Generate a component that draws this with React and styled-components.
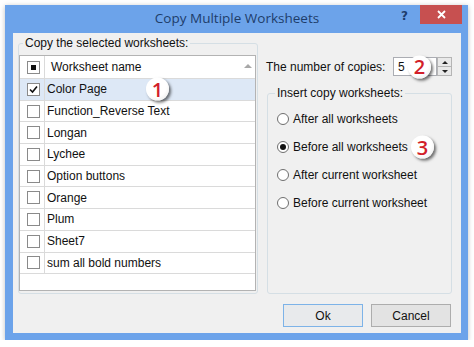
import React from "react";
import styled, { createGlobalStyle } from "styled-components";

const GlobalStyle = createGlobalStyle`
    html, body {
        margin: 0;
        padding: 0;
        background: #ffffff;
    }
    body {
        font-family: "Liberation Sans", Arial, sans-serif;
        font-size: 12px;
        color: #111;
    }
`;

const Page = styled.div`
    padding: 5px 0 0 5px;
`;

const Window = styled.div`
    width: 463px;
    height: 335px;
    box-sizing: border-box;
    background: #6ca3ea;
    padding: 0 7px 7px 8px;
    display: flex;
    flex-direction: column;
    box-shadow: 0 1px 5px rgba(0, 0, 0, 0.25);
`;

const TitleBar = styled.div`
    height: 28px;
    display: grid;
    grid-template-columns: 1fr auto 1fr;
    align-items: start;
`;

const Title = styled.div`
    grid-column: 2;
    font-family: "Open Sans", "Liberation Sans", sans-serif;
    font-size: 13.5px;
    line-height: 26px;
    color: #1e3d6b;
`;

const TitleControls = styled.div`
    grid-column: 3;
    justify-self: end;
    display: flex;
    align-items: flex-start;
    margin-right: -1px;
`;

const Help = styled.span`
    font-family: "DejaVu Sans", sans-serif;
    font-weight: bold;
    font-size: 12px;
    color: #1e3d6b;
    margin-top: 4px;
    margin-right: 12px;
`;

const Close = styled.div`
    width: 42px;
    height: 19px;
    background: #c75050;
    display: flex;
    align-items: center;
    justify-content: center;
`;

const Client = styled.div`
    flex: 1;
    background: #f0f0f0;
    display: grid;
    grid-template-columns: 240px 185px;
    grid-template-rows: 1fr auto;
    column-gap: 9px;
    row-gap: 10px;
    padding: 3px 9px 6px 5px;
`;

const GroupBox = styled.fieldset`
    margin: 0;
    min-width: 0;
    border: 1px solid #d5dfe5;
    border-radius: 3px;
    display: flex;
    flex-direction: column;
    padding: ${(p) => p.$pad};
    ${(p) => p.$grow && "flex: 1;"}
    ${(p) => p.$top && `margin-top: ${p.$top}px;`}
`;

const Legend = styled.legend`
    padding: 0 2px;
    margin-left: ${(p) => p.$offset}px;
    line-height: 14px;
    font-size: 12px;
`;

const List = styled.div`
    flex: 1;
    background: #ffffff;
    border: 1px solid #b3b3b3;
    display: flex;
    flex-direction: column;
`;

const ListRow = styled.div`
    position: relative;
    display: grid;
    grid-template-columns: 25px 1fr;
    height: ${(p) => (p.$header ? 22 : 20.7)}px;
    border-bottom: 1px solid #dadada;
    background: ${(p) => (p.$selected ? "#dde8f6" : "transparent")};
`;

const CheckCell = styled.div`
    border-right: 1px solid #dadada;
    display: flex;
    align-items: center;
    justify-content: center;
    padding-left: 2px;
`;

const NameCell = styled.div`
    display: flex;
    align-items: center;
    padding-left: ${(p) => (p.$header ? 6 : 2)}px;
    padding-right: 3px;
    white-space: nowrap;
`;

const SortArrow = styled.span`
    margin-left: auto;
    width: 0;
    height: 0;
    border-left: 4px solid transparent;
    border-right: 4px solid transparent;
    border-bottom: 4px solid #a8a8a8;
    margin-top: -2px;
`;

const Box = styled.span`
    width: 13px;
    height: 13px;
    box-sizing: border-box;
    border: 1px solid #8a8a8a;
    background: #fff;
    display: flex;
    align-items: center;
    justify-content: center;
`;

const Dot = styled.span`
    width: 5px;
    height: 5px;
    background: #111;
`;

const RightColumn = styled.div`
    display: flex;
    flex-direction: column;
`;

const CopiesRow = styled.div`
    margin-top: 21px;
    height: 19px;
    display: flex;
    align-items: center;
`;

const CopiesLabel = styled.span`
    flex: 1;
    margin-left: -1px;
`;

const SpinInput = styled.div`
    position: relative;
    width: 44px;
    height: 19px;
    box-sizing: border-box;
    border: 1px solid #abadb3;
    background: #fff;
    padding-left: 4px;
    display: flex;
    align-items: center;
`;

const Spinner = styled.div`
    width: 15px;
    height: 19px;
    display: flex;
    flex-direction: column;
`;

const SpinButton = styled.div`
    flex: 1;
    border: 1px solid #b5b5b5;
    background: #e9e9e9;
    display: flex;
    align-items: center;
    justify-content: center;
    & + & {
        border-top: none;
    }
`;

const Arrow = styled.span`
    width: 0;
    height: 0;
    border-left: 3px solid transparent;
    border-right: 3px solid transparent;
    ${(p) => (p.$up ? "border-bottom: 3px solid #222;" : "border-top: 3px solid #222;")}
`;

const RadioRow = styled.label`
    position: relative;
    height: 28px;
    display: flex;
    align-items: center;
    gap: 4px;
    white-space: nowrap;
`;

const RadioCircle = styled.span`
    width: 12px;
    height: 12px;
    box-sizing: border-box;
    border-radius: 50%;
    border: 1px solid #6e6e6e;
    background: #fff;
    display: flex;
    align-items: center;
    justify-content: center;
    &::after {
        content: "";
        width: 6px;
        height: 6px;
        border-radius: 50%;
        background: ${(p) => (p.$checked ? "#111" : "transparent")};
    }
`;

const ButtonBar = styled.div`
    grid-column: 1 / -1;
    display: flex;
    justify-content: flex-end;
    gap: 8px;
    margin-right: 1px;
`;

const Button = styled.div`
    width: 80px;
    height: 23px;
    box-sizing: border-box;
    border: 1px solid ${(p) => (p.$default ? "#7db3e8" : "#adadad")};
    background: ${(p) => (p.$default ? "#e8eaec" : "#e3e3e3")};
    display: flex;
    align-items: center;
    justify-content: center;
`;

const Badge = styled.span`
    position: absolute;
    left: ${(p) => p.$left}px;
    top: 50%;
    transform: translateY(-50%);
    width: 23px;
    height: 23px;
    border-radius: 50%;
    background: radial-gradient(circle at 40% 35%, #ffffff 55%, #e4e4e4 100%);
    box-shadow: 2px 2px 3px rgba(0, 0, 0, 0.55);
    display: flex;
    align-items: center;
    justify-content: center;
    font-family: "Open Sans", "Liberation Sans", sans-serif;
    font-weight: 600;
    font-size: 20px;
    line-height: 1;
    color: #d21f2a;
    z-index: 1;
`;

const sheets = [
    "Color Page",
    "Function_Reverse Text",
    "Longan",
    "Lychee",
    "Option buttons",
    "Orange",
    "Plum",
    "Sheet7",
    "sum all bold numbers",
];

const positions = [
    "After all worksheets",
    "Before all worksheets",
    "After current worksheet",
    "Before current worksheet",
];

function CheckBox({ checked, mixed }) {
    return (
        <Box>
            {mixed && <Dot />}
            {checked && (
                <svg width="9" height="9" viewBox="0 0 9 9">
                    <path d="M1 4.5 L3.5 7 L8 1.5" fill="none" stroke="#111" strokeWidth="1.6" />
                </svg>
            )}
        </Box>
    );
}

export default function App() {
    return (
        <Page>
            <GlobalStyle />
            <Window>
                <TitleBar>
                    <Title>Copy Multiple Worksheets</Title>
                    <TitleControls>
                        <Help>?</Help>
                        <Close>
                            <svg width="9" height="9" viewBox="0 0 9 9">
                                <path d="M1 1 L8 8 M8 1 L1 8" stroke="#fff" strokeWidth="1.8" />
                            </svg>
                        </Close>
                    </TitleControls>
                </TitleBar>
                <Client>
                    <GroupBox $pad="5px 1px 2px 0">
                        <Legend $offset={4}>Copy the selected worksheets:</Legend>
                        <List>
                            <ListRow $header>
                                <CheckCell>
                                    <CheckBox mixed />
                                </CheckCell>
                                <NameCell $header>
                                    Worksheet name
                                    <SortArrow />
                                </NameCell>
                            </ListRow>
                            {sheets.map((name, i) => (
                                <ListRow key={name} $selected={i === 0}>
                                    <CheckCell>
                                        <CheckBox checked={i === 0} />
                                    </CheckCell>
                                    <NameCell>{name}</NameCell>
                                    {i === 0 && <Badge $left={126}>1</Badge>}
                                </ListRow>
                            ))}
                        </List>
                    </GroupBox>
                    <RightColumn>
                        <CopiesRow>
                            <CopiesLabel>The number of copies:</CopiesLabel>
                            <SpinInput>
                                5
                                <Badge $left={14}>2</Badge>
                            </SpinInput>
                            <Spinner>
                                <SpinButton>
                                    <Arrow $up />
                                </SpinButton>
                                <SpinButton>
                                    <Arrow />
                                </SpinButton>
                            </Spinner>
                        </CopiesRow>
                        <GroupBox $pad="5px 0 0 9px" $grow $top={10}>
                            <Legend $offset={-2}>Insert copy worksheets:</Legend>
                            {positions.map((label, i) => (
                                <RadioRow key={label}>
                                    <RadioCircle $checked={i === 1} />
                                    {label}
                                    {i === 1 && <Badge $left={134}>3</Badge>}
                                </RadioRow>
                            ))}
                        </GroupBox>
                    </RightColumn>
                    <ButtonBar>
                        <Button $default>Ok</Button>
                        <Button>Cancel</Button>
                    </ButtonBar>
                </Client>
            </Window>
        </Page>
    );
}
